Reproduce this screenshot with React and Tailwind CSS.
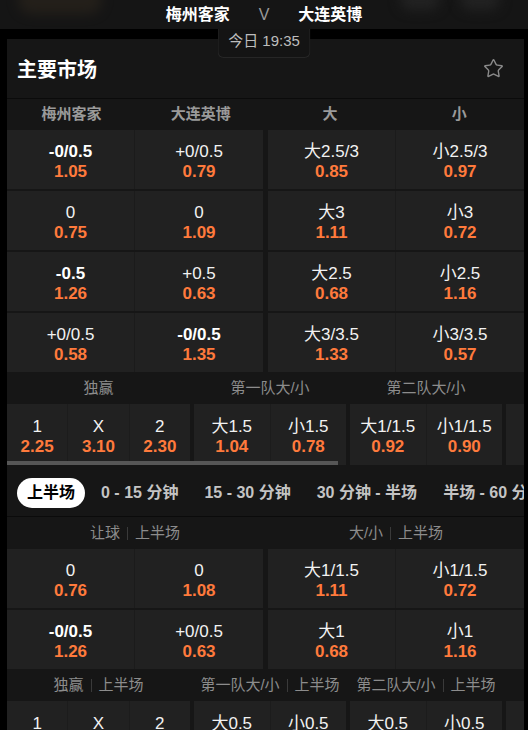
import { Star } from 'lucide-react';

const mainRows = [
  [
    { top: '-0/0.5', odds: '1.05', bold: true },
    { top: '+0/0.5', odds: '0.79' },
    { top: '大2.5/3', odds: '0.85' },
    { top: '小2.5/3', odds: '0.97' },
  ],
  [
    { top: '0', odds: '0.75' },
    { top: '0', odds: '1.09' },
    { top: '大3', odds: '1.11' },
    { top: '小3', odds: '0.72' },
  ],
  [
    { top: '-0.5', odds: '1.26', bold: true },
    { top: '+0.5', odds: '0.63' },
    { top: '大2.5', odds: '0.68' },
    { top: '小2.5', odds: '1.16' },
  ],
  [
    { top: '+0/0.5', odds: '0.58' },
    { top: '-0/0.5', odds: '1.35', bold: true },
    { top: '大3/3.5', odds: '1.33' },
    { top: '小3/3.5', odds: '0.57' },
  ],
];

const halfRows = [
  [
    { top: '0', odds: '0.76' },
    { top: '0', odds: '1.08' },
    { top: '大1/1.5', odds: '1.11' },
    { top: '小1/1.5', odds: '0.72' },
  ],
  [
    { top: '-0/0.5', odds: '1.26', bold: true },
    { top: '+0/0.5', odds: '0.63' },
    { top: '大1', odds: '0.68' },
    { top: '小1', odds: '1.16' },
  ],
];

const mainStrip = [
  {
    label: ['独赢'],
    wide: true,
    items: [
      { top: '1', odds: '2.25' },
      { top: 'X', odds: '3.10' },
      { top: '2', odds: '2.30' },
    ],
  },
  {
    label: ['第一队大/小'],
    items: [
      { top: '大1.5', odds: '1.04' },
      { top: '小1.5', odds: '0.78' },
    ],
  },
  {
    label: ['第二队大/小'],
    items: [
      { top: '大1/1.5', odds: '0.92' },
      { top: '小1/1.5', odds: '0.90' },
    ],
  },
  { label: [], items: [{ top: '', odds: '' }] },
];

const halfStrip = [
  {
    label: ['独赢', '上半场'],
    wide: true,
    items: [
      { top: '1', odds: '3.05' },
      { top: 'X', odds: '2.05' },
      { top: '2', odds: '3.10' },
    ],
  },
  {
    label: ['第一队大/小', '上半场'],
    items: [
      { top: '大0.5', odds: '0.98' },
      { top: '小0.5', odds: '0.82' },
    ],
  },
  {
    label: ['第二队大/小', '上半场'],
    items: [
      { top: '大0.5', odds: '0.95' },
      { top: '小0.5', odds: '0.85' },
    ],
  },
  { label: [], items: [{ top: '', odds: '' }] },
];

const tabs = ['上半场', '0 - 15 分钟', '15 - 30 分钟', '30 分钟 - 半场', '半场 - 60 分钟'];

function Label({ parts }) {
  return (
    <span className="inline-flex items-center text-[15px] text-[#8c8c8c]">
      {parts.map((p, i) => (
        <span key={i} className="inline-flex items-center">
          {i > 0 && <span className="inline-block w-px h-[13px] bg-[#3a3a3a] mx-[7px]" />}
          {p}
        </span>
      ))}
    </span>
  );
}

function OddsCell({ cell, className = '' }) {
  return (
    <div className={`flex flex-col items-center justify-center leading-5 text-[17px] ${className}`}>
      <span className={cell.bold ? 'font-bold text-white' : 'text-[#f2f2f2]'}>{cell.top}</span>
      <span className="font-bold text-[#ff7a3c]">{cell.odds}</span>
    </div>
  );
}

function OddsTable({ rows }) {
  return (
    <div className="flex flex-col gap-[2px]">
      {rows.map((row, r) => (
        <div key={r} className="grid grid-cols-2 gap-[5px]">
          {[row.slice(0, 2), row.slice(2)].map((group, g) => (
            <div key={g} className="grid grid-cols-2 h-[59px] bg-[#212121]">
              {group.map((cell, c) => (
                <OddsCell
                  key={c}
                  cell={cell}
                  className={`pt-[4px] ${c === 0 ? 'border-r border-[#1b1b1b]' : ''}`}
                />
              ))}
            </div>
          ))}
        </div>
      ))}
    </div>
  );
}

function Strip({ blocks, thumb }) {
  return (
    <div className="relative overflow-hidden">
      <div className="flex gap-[4px]">
        {blocks.map((b, i) => (
          <div key={i} className={`flex flex-col shrink-0 ${b.wide ? 'w-[183px]' : 'w-[152px]'}`}>
            <div className="h-[32px] flex items-center justify-center">
              <Label parts={b.label} />
            </div>
            <div className="flex h-[61px] bg-[#212121]">
              {b.items.map((it, j) => (
                <OddsCell
                  key={j}
                  cell={it}
                  className={`flex-1 pt-[4px] ${j < b.items.length - 1 ? 'border-r border-[#1c1c1c]' : ''}`}
                />
              ))}
            </div>
          </div>
        ))}
      </div>
      {thumb && <div className="absolute left-0 bottom-0 h-[4px] w-[331px] bg-[#565656]" />}
    </div>
  );
}

export default function App() {
  return (
    <div className="min-h-screen bg-black text-white font-[family-name:'Liberation_Sans','Noto_Sans_CJK_SC',sans-serif] overflow-hidden">
      <div className="relative h-[29px] bg-[#151515] overflow-hidden">
        <div className="absolute left-[18px] -top-[14px] w-[84px] h-[28px] rounded-full bg-[#2a241c] blur-[6px] opacity-70" />
        <div className="absolute left-[400px] -top-[10px] w-[40px] h-[20px] rounded-full bg-[#222] blur-[6px]" />
        <div className="absolute left-[460px] -top-[10px] w-[40px] h-[20px] rounded-full bg-[#222] blur-[6px]" />
        <div className="relative h-full grid grid-cols-[1fr_auto_1fr] items-center gap-[29px]">
          <span className="text-right text-[16px] font-bold">梅州客家</span>
          <span className="text-[16px] text-[#9a9a9a]">V</span>
          <span className="text-left text-[16px] font-bold">大连英博</span>
        </div>
      </div>
      <div className="h-[10px]" />

      <div className="relative ml-[7px] w-[517px] bg-[#161616] overflow-hidden">
        <div className="h-[60px] flex items-center justify-between pl-[10px] pr-[20px] border-b border-[#0b0b0b]">
          <h2 className="text-[20px] font-bold pt-[2px]">主要市场</h2>
          <Star size={21} strokeWidth={1.6} className="text-[#8a8a8a]" />
        </div>

        <div className="grid grid-cols-4 h-[31px] items-center text-center text-[15px] font-bold text-[#9a9a9a]">
          <span>梅州客家</span>
          <span>大连英博</span>
          <span>大</span>
          <span>小</span>
        </div>
        <OddsTable rows={mainRows} />
        <Strip blocks={mainStrip} thumb />

        <div className="flex items-center gap-[6px] pt-[13px] pb-[8px] pl-[10px] whitespace-nowrap border-b border-[#0b0b0b]">
          {tabs.map((t, i) => (
            <span
              key={t}
              className={`h-[30px] px-[10px] flex items-center rounded-full text-[16px] font-bold ${
                i === 0 ? 'bg-white text-black' : 'text-[#c4c4c4]'
              }`}
            >
              {t}
            </span>
          ))}
        </div>

        <div className="grid grid-cols-2 gap-[5px] h-[32px] items-center text-center">
          <div><Label parts={['让球', '上半场']} /></div>
          <div><Label parts={['大/小', '上半场']} /></div>
        </div>
        <OddsTable rows={halfRows} />
        <Strip blocks={halfStrip} />
      </div>

      <div className="absolute left-1/2 top-[29px] -translate-x-1/2 w-[93px] h-[29px] bg-[#141414] border border-t-0 border-[#262626] rounded-b-[6px] flex items-center justify-center pb-[3px] text-[15px] text-[#bdbdbd]">
        今日 19:35
      </div>
    </div>
  );
}
